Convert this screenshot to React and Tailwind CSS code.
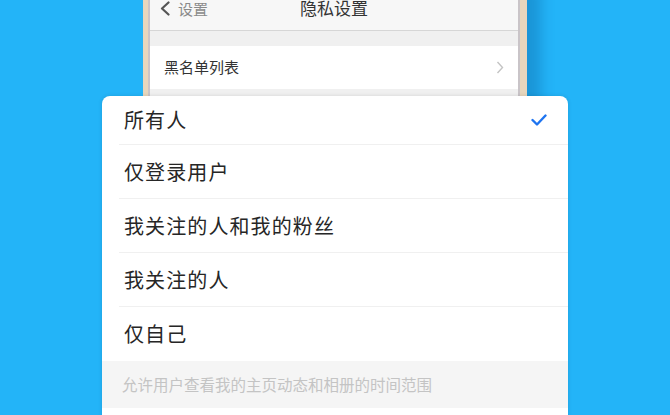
const options = ['所有人', '仅登录用户', '我关注的人和我的粉丝', '我关注的人', '仅自己'];

const font = { fontFamily: '"Noto Sans CJK SC", "Noto Sans", sans-serif' };

export default function App() {
  return (
    <div
      className="relative w-[670px] h-[415px] overflow-hidden bg-[#23b4f8]"
      style={font}
    >
      {/* Phone */}
      <div className="ml-[143px] mt-[-14px] w-[384px] h-[460px] flex border-l-[5px] border-r-[7px] border-[#e6d6bd] shadow-[14px_0_12px_rgba(0,60,120,0.25)]">
        <div className="flex-1 flex flex-col border-x-2 border-[#c9c4c8] bg-[#f0f0f0]">
          {/* Header */}
          <div className="h-[45px] flex items-end pb-[14px] relative bg-[#f7f7f7] border-b border-[#d6d6d6]">
            <div className="flex items-center pl-[9px] gap-[7px] text-[#8a8a8a] text-[15px] leading-none">
              <svg width="12" height="15" viewBox="0 0 12 15" fill="none">
                <path d="M9.5 1.5 L3 7.5 L9.5 13.5" stroke="#555" strokeWidth="2.2" strokeLinecap="round" strokeLinejoin="round" />
              </svg>
              <span>设置</span>
            </div>
            <div className="absolute left-0 right-0 bottom-[14px] text-center text-[17px] leading-none text-[#333]">
              隐私设置
            </div>
          </div>
          <div className="h-[15px]" />
          <div className="h-[43px] bg-white flex items-center justify-between pl-[14px] pr-[14px]">
            <span className="text-[15px] text-[#333]">黑名单列表</span>
            <svg width="8" height="13" viewBox="0 0 8 13" fill="none">
              <path d="M1.5 1 L6.5 6.5 L1.5 12" stroke="#c4c4c4" strokeWidth="1.4" />
            </svg>
          </div>
        </div>
      </div>

      {/* Action sheet */}
      <div className="absolute left-[102px] top-[96px] w-[466px] bg-white rounded-t-[8px] shadow-[0_0_4px_rgba(0,0,0,0.12)]">
        {options.map((label, i) => (
          <div key={label}>
            {i > 0 && <div className="ml-[17px] h-px bg-[#f0f0f0]" />}
            <div
              className={`flex items-center justify-between pl-[22px] pr-[21px] ${
                i === 0 ? 'h-[48px]' : i === options.length - 1 ? 'h-[54px]' : 'h-[53px]'
              }`}
            >
              <span className="text-[20px] tracking-[1.1px] text-[#262626]">{label}</span>
              {i === 0 && (
                <svg width="16" height="12" viewBox="0 0 16 12" fill="none">
                  <path d="M1.5 6 L6 10.5 L14.5 1.5" stroke="#1e74f0" strokeWidth="2.4" strokeLinecap="round" strokeLinejoin="round" />
                </svg>
              )}
            </div>
          </div>
        ))}
        <div className="h-[47px] bg-[#f5f5f5] flex items-center pl-[20px]">
          <span className="text-[15.5px] text-[#c4c4c4]">允许用户查看我的主页动态和相册的时间范围</span>
        </div>
        <div className="h-[20px] bg-white" />
      </div>
    </div>
  );
}
